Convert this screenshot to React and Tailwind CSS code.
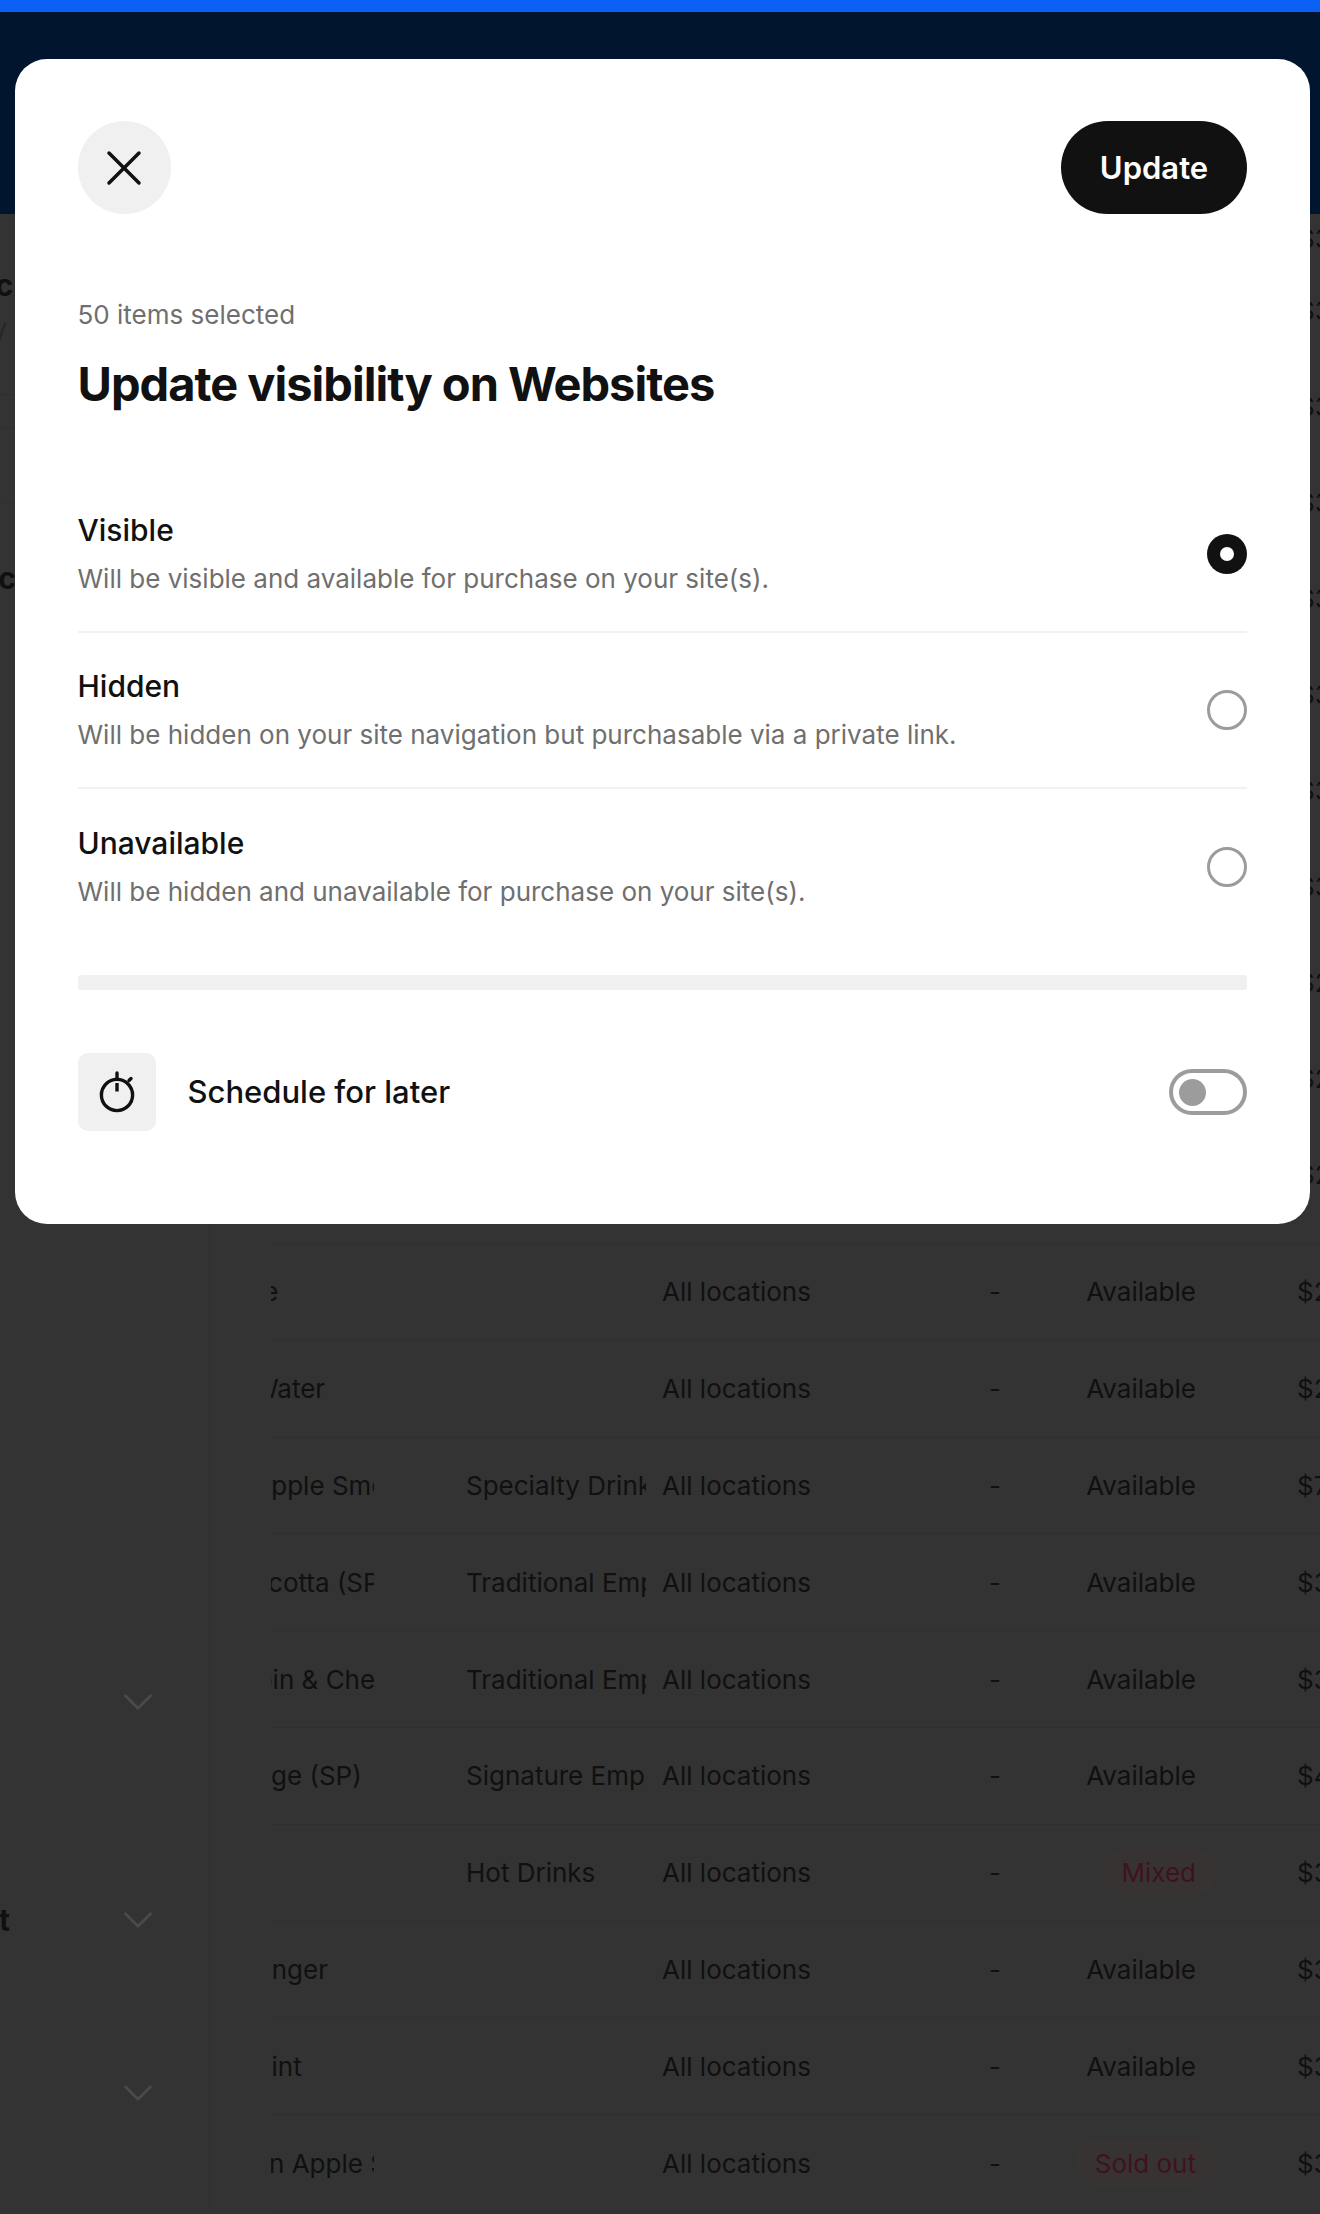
import React from 'react';
import { X, ChevronDown } from 'lucide-react';

const options = [
  { title: 'Visible', desc: 'Will be visible and available for purchase on your site(s).', selected: true },
  { title: 'Hidden', desc: 'Will be hidden on your site navigation but purchasable via a private link.' },
  { title: 'Unavailable', desc: 'Will be hidden and unavailable for purchase on your site(s).' },
];

// rows that sit behind the modal, only the price peeks out on the right
const hiddenPrices = ['$3', '$3', '$3', '$3', '$3', '$3', '$3', '$3', '$2', '$2', '$2'];

const rows = [
  { name: 'Coffee', shift: '-ml-[75px]', category: '', status: 'Available', price: '$2' },
  { name: 'Water', shift: '-ml-[18px]', category: '', status: 'Available', price: '$2' },
  { name: 'Pineapple Smoothie', shift: '-ml-[68px]', category: 'Specialty Drinks', status: 'Available', price: '$7' },
  { name: 'Ricotta (SP)', shift: '-ml-[26px]', category: 'Traditional Empanadas', status: 'Available', price: '$3' },
  { name: 'Spin & Cheese', shift: '-ml-[31px]', category: 'Traditional Empanadas', status: 'Available', price: '$3' },
  { name: 'Sausage (SP)', shift: '-ml-[75px]', category: 'Signature Empanadas', status: 'Available', price: '$4' },
  { name: '', shift: '', category: 'Hot Drinks', status: 'Mixed', price: '$3' },
  { name: 'Ginger', shift: '-ml-[25px]', category: '', status: 'Available', price: '$3' },
  { name: 'Mint', shift: '-ml-[23px]', category: '', status: 'Available', price: '$3' },
  { name: 'Cinnamon Apple Spice', shift: '-ml-[111px]', category: '', status: 'Sold out', price: '$3' },
];

function Stopwatch() {
  return (
    <svg viewBox="0 0 44 44" className="w-11 h-11" fill="none" stroke="#111111" strokeWidth="3.4" strokeLinecap="round">
      <circle cx="22" cy="25" r="15.6" />
      <path d="M22 3v5" />
      <path d="M22 13v8.5" strokeLinecap="butt" />
      <path d="M34 10.5l2-2" />
    </svg>
  );
}

function Chevron() {
  return <ChevronDown size={50} strokeWidth={1.3} className="text-[#4a4a4a]" />;
}

function BackgroundPage() {
  return (
    <div className="h-[2214px] bg-[#333333] overflow-hidden text-[26px] text-[#101010]">
      <div className="h-3 bg-[#0a5ff5]" />
      <div className="h-[202px] bg-[#02152f]" />
      <div className="flex">
        <aside className="w-[210px] shrink-0 h-[2000px] border-r border-[#303030] overflow-hidden">
          <div className="h-[54px]" />
          <div className="-ml-[107px] w-[120px] text-right text-[30px] font-bold leading-[34px]">Specifici</div>
          <div className="mt-[10px] -ml-[113px] w-[120px] text-right text-[#262626] leading-[34px]">Every</div>
          <div className="h-[49px] border-b border-[#2f2f2f]" />
          <div className="h-[33px] border-b border-[#2f2f2f]" />
          <div className="h-[75px] border-b border-[#2f2f2f]" />
          <div className="h-[58px]" />
          <div className="-ml-[104px] w-[120px] text-right text-[30px] font-bold leading-[34px]">Produc</div>
          <div className="h-[1082px]" />
          <div className="h-[50px] pl-[113px]"><Chevron /></div>
          <div className="h-[168px]" />
          <div className="h-[50px] flex items-center">
            <span className="-ml-[110px] w-[120px] shrink-0 text-[30px] font-bold text-right">Product</span>
            <span className="ml-[103px]"><Chevron /></span>
          </div>
          <div className="h-[123px]" />
          <div className="h-[50px] pl-[113px]"><Chevron /></div>
        </aside>
        <div className="flex-1 min-w-0 pl-[61px]">
          {hiddenPrices.map((price, i) => (
            <div key={i} className={`flex items-center justify-end ${i === 0 ? 'h-[48px]' : 'h-[96px]'}`}>
              <span className="w-[22px] overflow-hidden whitespace-nowrap">{price}</span>
            </div>
          ))}
          <div className="h-[22px] border-b border-[#2f2f2f]" />
          {rows.map((row, i) => (
            <div key={i} className="h-[96.8px] border-b border-[#2f2f2f] grid grid-cols-[195px_196px_327px_74px_133px_1fr] items-center whitespace-nowrap">
              <div className="w-[103px] overflow-hidden"><span className={`block ${row.shift}`}>{row.name}</span></div>
              <div className="w-[180px] overflow-hidden">{row.category}</div>
              <div>All locations</div>
              <div>-</div>
              <div className="flex justify-end">
                {row.status === 'Available' ? (
                  <span>{row.status}</span>
                ) : (
                  <span className="-mr-5 h-[48px] px-5 rounded-full bg-[#383333] text-[#3f1220] flex items-center">{row.status}</span>
                )}
              </div>
              <div className="pl-[101px]">{row.price}</div>
            </div>
          ))}
        </div>
      </div>
    </div>
  );
}

export default function App() {
  return (
    <div className="relative w-[1320px] h-[2214px] overflow-hidden font-['Inter',sans-serif]">
      <BackgroundPage />

      {/* Modal */}
      <div className="absolute left-[15px] top-[59px] w-[1294.5px] h-[1165px] bg-white rounded-[32px] px-[62.5px] pt-[62px]">
        <div className="flex items-center justify-between">
          <button className="w-[93px] h-[93px] rounded-full bg-[#f0f0f0] flex items-center justify-center text-[#111111]">
            <X size={60} strokeWidth={1.4} />
          </button>
          <button className="w-[186px] h-[93px] pt-[2px] rounded-full bg-[#111111] text-white text-[31px] font-semibold">Update</button>
        </div>

        <p className="mt-[83px] text-[26px] leading-[36px] text-[#6f6f6f]">50 items selected</p>
        <h1 className="mt-[23px] text-[47px] leading-[56px] font-bold tracking-[-1px] text-[#111111]">Update visibility on Websites</h1>

        <div className="mt-[65px]">
          {options.map((option, i) => (
            <div key={option.title} className={`h-[156px] flex items-center justify-between ${i < 2 ? 'border-b-2 border-[#f2f2f2]' : ''}`}>
              <div>
                <div className="text-[30px] leading-[40px] font-medium text-[#111111]">{option.title}</div>
                <div className="mt-[10px] text-[26px] leading-[38px] text-[#6f6f6f]">{option.desc}</div>
              </div>
              {option.selected ? (
                <div className="w-[40px] h-[40px] rounded-full bg-[#111111] flex items-center justify-center">
                  <div className="w-[14px] h-[14px] rounded-full bg-white" />
                </div>
              ) : (
                <div className="w-[40px] h-[40px] rounded-full border-[3.5px] border-[#9c9c9c]" />
              )}
            </div>
          ))}
        </div>

        <div className="mt-[30px] h-[15px] rounded-[3px] bg-[#f0f0f0]" />

        <div className="mt-[63px] flex items-center justify-between">
          <div className="flex items-center gap-8">
            <div className="w-[78px] h-[78px] rounded-[10px] bg-[#f0f0f0] flex items-center justify-center">
              <Stopwatch />
            </div>
            <span className="text-[31px] font-medium text-[#111111]">Schedule for later</span>
          </div>
          <div className="w-[78px] h-[46px] rounded-full border-[4px] border-[#9c9c9c] flex items-center pl-[6px]">
            <div className="w-[27px] h-[27px] rounded-full bg-[#9c9c9c]" />
          </div>
        </div>
      </div>
    </div>
  );
}
